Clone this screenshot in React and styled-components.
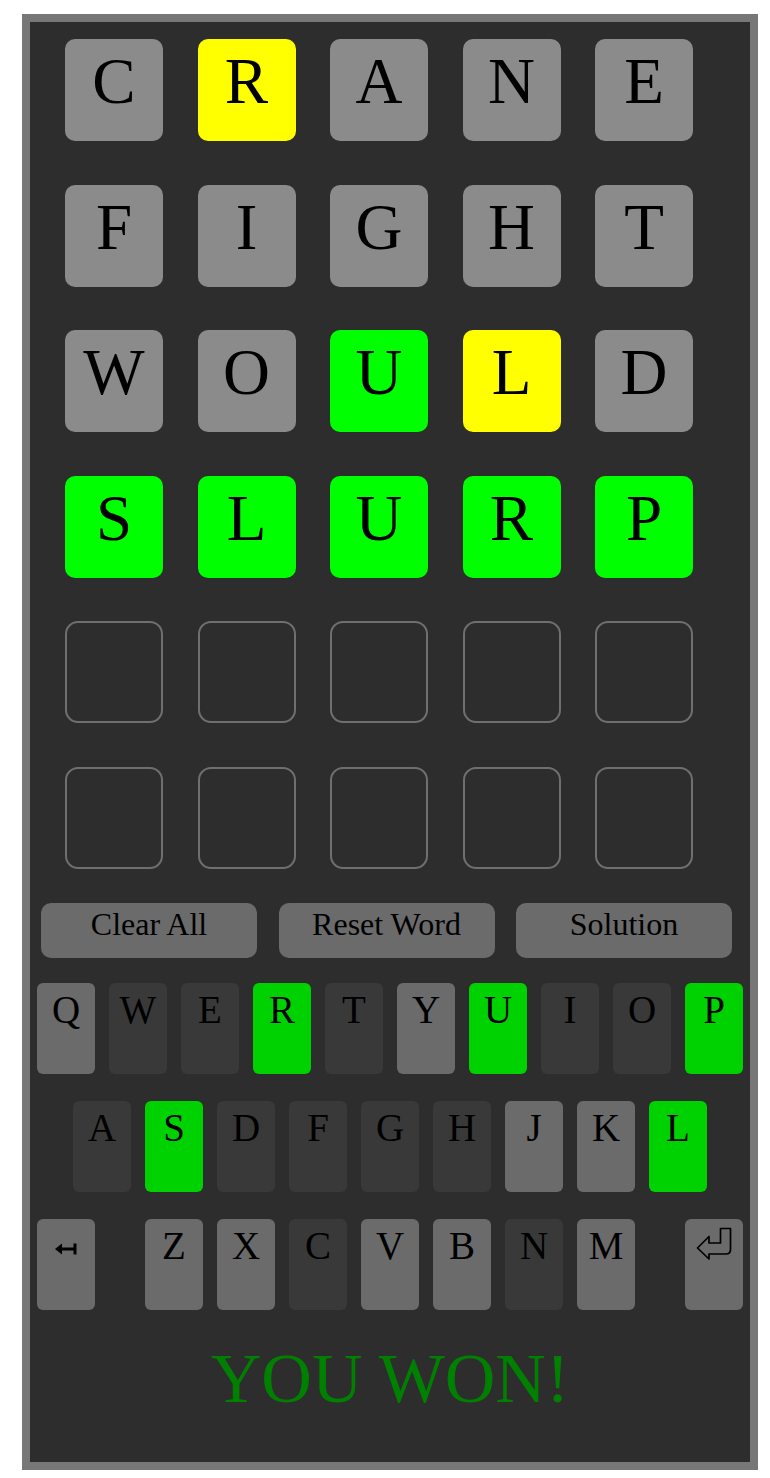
import React from 'react';
import styled, { createGlobalStyle } from 'styled-components';

const GlobalStyle = createGlobalStyle`
    body {
        margin: 0;
        background: #ffffff;
        font-family: "Liberation Serif", "Times New Roman", serif;
    }
`;

const guesses = [
    { word: 'CRANE', marks: 'xyxxx' },
    { word: 'FIGHT', marks: 'xxxxx' },
    { word: 'WOULD', marks: 'xxgyx' },
    { word: 'SLURP', marks: 'ggggg' },
    { word: '', marks: '' },
    { word: '', marks: '' },
];

// key states: g = green, a = absent (dark), u = unused (light)
const keyRows = [
    [['Q', 'u'], ['W', 'a'], ['E', 'a'], ['R', 'g'], ['T', 'a'], ['Y', 'u'], ['U', 'g'], ['I', 'a'], ['O', 'a'], ['P', 'g']],
    [['A', 'a'], ['S', 'g'], ['D', 'a'], ['F', 'a'], ['G', 'a'], ['H', 'a'], ['J', 'u'], ['K', 'u'], ['L', 'g']],
    [['Z', 'u'], ['X', 'u'], ['C', 'a'], ['V', 'u'], ['B', 'u'], ['N', 'a'], ['M', 'u']],
];

const tileColors = {
    x: '#8b8b8b',
    y: '#ffff00',
    g: '#00ff00',
};

const keyColors = {
    u: '#6b6b6b',
    a: '#393939',
    g: '#00d100',
};

function BackspaceIcon() {
    return (
        <svg width="22" height="12" viewBox="0 0 22 12">
            <path d="M5 6 H19" stroke="#000" strokeWidth="3" fill="none" />
            <path d="M20 0.5 V11.5" stroke="#000" strokeWidth="3" fill="none" />
            <polygon points="0,6 7,0.5 7,11.5" fill="#000" />
        </svg>
    );
}

function EnterIcon() {
    return (
        <svg width="36" height="34" viewBox="0 0 36 34">
            <path
                d="M1.5 21 L13 9.5 L13 16 L24.5 16 L24.5 1.5 L34.5 1.5 L34.5 22.5 Q34.5 27 30 27 L13 27 L13 32 Z"
                stroke="#000"
                strokeWidth="1.7"
                strokeLinejoin="round"
                fill="none"
            />
        </svg>
    );
}

function App() {
    return (
        <>
            <GlobalStyle />
            <GameFrame>
                <Board>
                    {guesses.map((guess, r) =>
                        [0, 1, 2, 3, 4].map((c) =>
                            guess.word ? (
                                <Tile key={`${r}-${c}`} $color={tileColors[guess.marks[c]]}>
                                    {guess.word[c]}
                                </Tile>
                            ) : (
                                <EmptyTile key={`${r}-${c}`} />
                            )
                        )
                    )}
                </Board>

                <ButtonBar>
                    <ActionButton>Clear All</ActionButton>
                    <ActionButton>Reset Word</ActionButton>
                    <ActionButton>Solution</ActionButton>
                </ButtonBar>

                <Keyboard>
                    <KeyRow>
                        {keyRows[0].map(([k, s]) => (
                            <Key key={k} $color={keyColors[s]}>{k}</Key>
                        ))}
                    </KeyRow>
                    <KeyRow>
                        {keyRows[1].map(([k, s]) => (
                            <Key key={k} $color={keyColors[s]}>{k}</Key>
                        ))}
                    </KeyRow>
                    <KeyRow>
                        <Key $color={keyColors.u} $top={24}>
                            <BackspaceIcon />
                        </Key>
                        <Spacer />
                        {keyRows[2].map(([k, s]) => (
                            <Key key={k} $color={keyColors[s]}>{k}</Key>
                        ))}
                        <Spacer />
                        <Key $color={keyColors.u} $top={8}>
                            <EnterIcon />
                        </Key>
                    </KeyRow>
                </Keyboard>

                <Message>YOU WON!</Message>
            </GameFrame>
        </>
    );
}

const GameFrame = styled.div`
    box-sizing: border-box;
    width: 736px;
    height: 1456px;
    margin: 14px 0 0 22px;
    border: 8px solid #777777;
    background: #2d2d2d;
    padding-top: 17px;
    display: flex;
    flex-direction: column;
`;

const Board = styled.div`
    display: grid;
    grid-template-columns: repeat(5, 98px);
    grid-auto-rows: 102px;
    column-gap: 34.5px;
    row-gap: 43.6px;
    padding-left: 35px;
`;

const Tile = styled.div`
    background: ${(p) => p.$color};
    border-radius: 10px;
    display: flex;
    justify-content: center;
    align-items: flex-start;
    padding-top: 10px;
    box-sizing: border-box;
    font-size: 65px;
    line-height: 65px;
    color: #000;
`;

const EmptyTile = styled.div`
    box-sizing: border-box;
    border: 2px solid #6f6f6f;
    border-radius: 13px;
`;

const ButtonBar = styled.div`
    display: flex;
    gap: 21.5px;
    padding-left: 11px;
    margin-top: 34px;
`;

const ActionButton = styled.div`
    box-sizing: border-box;
    width: 216px;
    height: 55px;
    background: #6b6b6b;
    border-radius: 10px;
    text-align: center;
    font-size: 32px;
    line-height: 32px;
    padding-top: 5px;
    color: #000;
`;

const Keyboard = styled.div`
    display: flex;
    flex-direction: column;
    gap: 27px;
    margin-top: 25px;
`;

const KeyRow = styled.div`
    display: flex;
    justify-content: center;
    gap: 14px;
`;

const Key = styled.div`
    box-sizing: border-box;
    width: 58px;
    height: 91px;
    background: ${(p) => p.$color};
    border-radius: 6px;
    display: flex;
    justify-content: center;
    align-items: flex-start;
    padding-top: ${(p) => (p.$top != null ? p.$top : 7)}px;
    font-size: 39px;
    line-height: 39px;
    color: #000;

    svg {
        display: block;
    }
`;

const Spacer = styled.div`
    width: 22px;
`;

const Message = styled.div`
    margin-top: 34px;
    text-align: center;
    font-size: 70px;
    line-height: 70px;
    color: #008000;
`;

export default App;
